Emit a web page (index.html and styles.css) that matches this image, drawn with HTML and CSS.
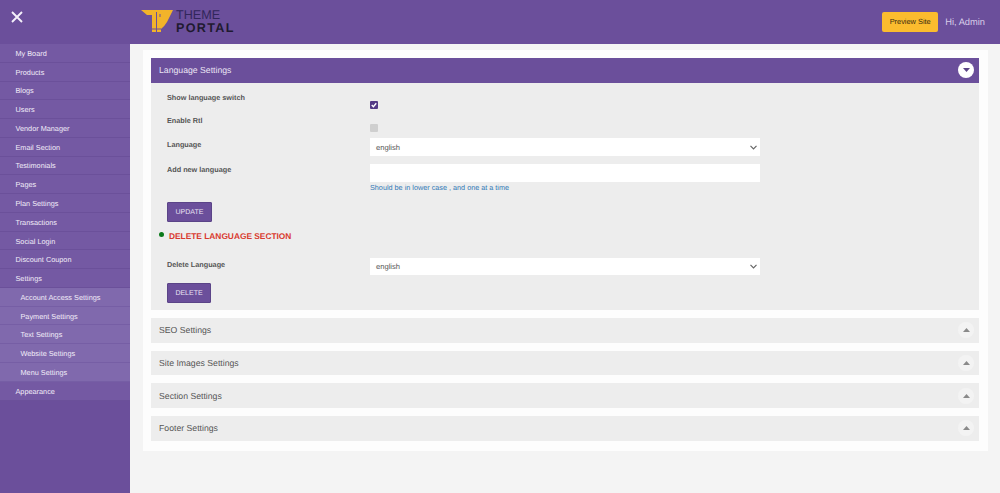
FILE: index.html
```html
<!DOCTYPE html>
<html lang="en">
<head>
<meta charset="utf-8">
<title>Language Settings</title>
<link rel="stylesheet" href="styles.css">
</head>
<body>
<header class="topbar">
  <div class="topbar-left">
    <svg class="close-icon" width="12" height="12" viewBox="0 0 12 12"><path d="M1 1L11 11M11 1L1 11" stroke="#f4f0fa" stroke-width="1.9" fill="none"/></svg>
  </div>
  <div class="brand">
    <svg class="brand-mark" width="32" height="23" viewBox="0 0 32 23">
      <path d="M0 0H32L26 12Q23 17 20 19V22H11V5H6Z" fill="#f2b32a"/>
      <path d="M15.5 2V22M11 19H20M19 4V7" stroke="#6b4f9b" stroke-width="1" fill="none"/>
    </svg>
    <div class="brand-text">
      <span class="brand-top">THEME</span>
      <span class="brand-bottom">PORTAL</span>
    </div>
  </div>
  <div class="topbar-right">
    <a class="preview-btn">Preview Site</a>
    <span class="greeting">Hi, Admin</span>
  </div>
</header>
<div class="layout">
  <nav class="sidebar">
    <a class="nav-item">My Board</a>
    <a class="nav-item">Products</a>
    <a class="nav-item">Blogs</a>
    <a class="nav-item">Users</a>
    <a class="nav-item">Vendor Manager</a>
    <a class="nav-item">Email Section</a>
    <a class="nav-item">Testimonials</a>
    <a class="nav-item">Pages</a>
    <a class="nav-item">Plan Settings</a>
    <a class="nav-item">Transactions</a>
    <a class="nav-item">Social Login</a>
    <a class="nav-item">Discount Coupon</a>
    <a class="nav-item">Settings</a>
    <a class="nav-item sub">Account Access Settings</a>
    <a class="nav-item sub">Payment Settings</a>
    <a class="nav-item sub">Text Settings</a>
    <a class="nav-item sub">Website Settings</a>
    <a class="nav-item sub">Menu Settings</a>
    <a class="nav-item">Appearance</a>
  </nav>
  <main class="main">
    <div class="card">
      <section class="panel">
        <div class="panel-head open">
          <span>Language Settings</span>
          <span class="toggle open"><svg width="7" height="4" viewBox="0 0 7 4"><path d="M0 0H7L3.5 4Z" fill="#5b4486"/></svg></span>
        </div>
        <div class="panel-body">
          <div class="row row-check">
            <label class="lbl">Show language switch</label>
            <div class="ctl"><span class="check on"><svg width="6" height="6" viewBox="0 0 8 8"><path d="M1 4L3.2 6.2L7 1.6" stroke="#fff" stroke-width="1.8" fill="none"/></svg></span></div>
          </div>
          <div class="row row-check">
            <label class="lbl">Enable Rtl</label>
            <div class="ctl"><span class="check off"></span></div>
          </div>
          <div class="row row-select">
            <label class="lbl">Language</label>
            <div class="ctl"><div class="field select">english<svg width="7" height="5" viewBox="0 0 7 5"><path d="M0.5 0.8L3.5 3.8L6.5 0.8" stroke="#666" stroke-width="1.2" fill="none"/></svg></div></div>
          </div>
          <div class="row row-input">
            <label class="lbl">Add new language</label>
            <div class="ctl">
              <div class="field"></div>
              <p class="help">Should be in lower case , and one at a time</p>
            </div>
          </div>
          <button class="btn update-btn">UPDATE</button>
          <h3 class="danger-title">DELETE LANGUAGE SECTION</h3>
          <div class="row row-delete">
            <label class="lbl">Delete Language</label>
            <div class="ctl"><div class="field select short">english<svg width="7" height="5" viewBox="0 0 7 5"><path d="M0.5 0.8L3.5 3.8L6.5 0.8" stroke="#666" stroke-width="1.2" fill="none"/></svg></div></div>
          </div>
          <button class="btn delete-btn">DELETE</button>
        </div>
      </section>
      <section class="panel"><div class="panel-head"><span>SEO Settings</span><span class="toggle"><svg width="7" height="4" viewBox="0 0 7 4"><path d="M3.5 0L7 4H0Z" fill="#8a8a8a"/></svg></span></div></section>
      <section class="panel"><div class="panel-head"><span>Site Images Settings</span><span class="toggle"><svg width="7" height="4" viewBox="0 0 7 4"><path d="M3.5 0L7 4H0Z" fill="#8a8a8a"/></svg></span></div></section>
      <section class="panel"><div class="panel-head"><span>Section Settings</span><span class="toggle"><svg width="7" height="4" viewBox="0 0 7 4"><path d="M3.5 0L7 4H0Z" fill="#8a8a8a"/></svg></span></div></section>
      <section class="panel"><div class="panel-head"><span>Footer Settings</span><span class="toggle"><svg width="7" height="4" viewBox="0 0 7 4"><path d="M3.5 0L7 4H0Z" fill="#8a8a8a"/></svg></span></div></section>
    </div>
  </main>
</div>
</body>
</html>
```
FILE: styles.css
```css
* { box-sizing: border-box; }
html, body { margin: 0; height: 493px; overflow: hidden; }
body { font-family: "Liberation Sans", Arial, sans-serif; background: #f4f4f4; color: #444; text-rendering: geometricPrecision; }

.topbar { height: 44px; background: #6b4f9b; display: flex; align-items: center; }
.topbar-left { width: 141px; padding-left: 11px; display: flex; align-items: center; }
.close-icon { display: block; margin-top: -10px; }
.brand { display: flex; align-items: center; gap: 3px; margin-top: -1px; }
.brand-mark { display: block; }
.brand-text { display: flex; flex-direction: column; line-height: 13px; margin-top: 1px; }
.brand-top { font-size: 12.6px; color: #31265a; }
.brand-bottom { font-size: 12.6px; font-weight: 700; letter-spacing: 1.3px; color: #1f1a30; }
.topbar-right { margin-left: auto; display: flex; align-items: center; gap: 7px; padding-right: 15px; margin-top: -1px; }
.preview-btn { width: 56px; height: 20px; background: #fbbc2e; border-radius: 2px; color: #3a2c10; font-size: 7.4px; display: flex; align-items: center; justify-content: center; }
.greeting { color: #d8cde8; font-size: 9.3px; }

.layout { display: flex; height: 449px; }
.sidebar { width: 130px; background: #6b4f9b; display: flex; flex-direction: column; flex-shrink: 0; }
.nav-item { height: 18.78px; background: #7459a3; border-bottom: 1px solid #6b509a; color: #f1ecf8; font-size: 7.3px; padding: 1px 0 0 15.5px; display: flex; align-items: center; }
.nav-item.sub { background: #8069ad; border-bottom-color: #765ea5; padding-left: 20.5px; }

.main { flex: 1; padding: 6px 12px 0 13px; }
.card { background: #fdfdfd; padding: 8px 9px 10px 8px; height: 400.6px; display: flex; flex-direction: column; gap: 8px; }
.panel { background: #ededed; }
.panel-head { height: 24.67px; display: flex; align-items: center; justify-content: space-between; padding: 0 5px 0 8px; font-size: 8.7px; color: #555; }
.panel-head.open { height: 25px; background: #6b4f9b; color: #eae4f4; padding-bottom: 1px; }
.toggle { width: 16px; height: 16px; border-radius: 50%; background: #f3f3f3; display: flex; align-items: center; justify-content: center; }
.toggle.open { background: #fff; }

.panel-body { height: 227px; padding: 6px 16px 0; }
.row { display: flex; }
.lbl { width: 203px; flex-shrink: 0; padding-top: 1px; font-size: 7.27px; font-weight: 700; color: #555; line-height: 16px; }
.ctl { width: 390px; }
.row-check { height: 23px; }
.row-check + .row-check { height: 24px; }
.row-check .ctl { padding-top: 12px; }
.row-select { height: 25px; }
.row-select .ctl { padding-top: 2px; }
.row-input { height: 41px; }
.row-input .ctl { padding-top: 3px; }
.row-delete { height: 27px; margin-top: 13px; }
.row-delete .ctl { padding-top: 2px; }
.check { width: 7.5px; height: 8px; display: flex; align-items: center; justify-content: center; border-radius: 1px; }
.check.on { background: #533a85; }
.check.off { background: #cfcfcf; }
.field { width: 390px; height: 18px; background: #fff; font-size: 7.6px; color: #555; padding: 0 6px; display: flex; align-items: center; justify-content: space-between; }
.field.short { height: 17px; }
.select svg { margin-right: -3px; }
.help { margin: 0; font-size: 7.25px; line-height: 11px; color: #337ab7; }
.btn { display: block; width: 45px; height: 20px; padding: 0; background: #6b4f9b; border: 1px solid #5b4488; border-radius: 1px; color: #e9e2f3; font-family: inherit; font-size: 7px; text-rendering: geometricPrecision; }
.delete-btn { width: 44px; }
.danger-title { position: relative; margin: 7px 0 0 2px; height: 14px; font-size: 8.36px; line-height: 14px; font-weight: 700; color: #d9392e; }
.danger-title::before { content: ""; position: absolute; left: -10px; top: 3px; width: 5px; height: 5px; border-radius: 50%; background: #0a7a1a; }
```
